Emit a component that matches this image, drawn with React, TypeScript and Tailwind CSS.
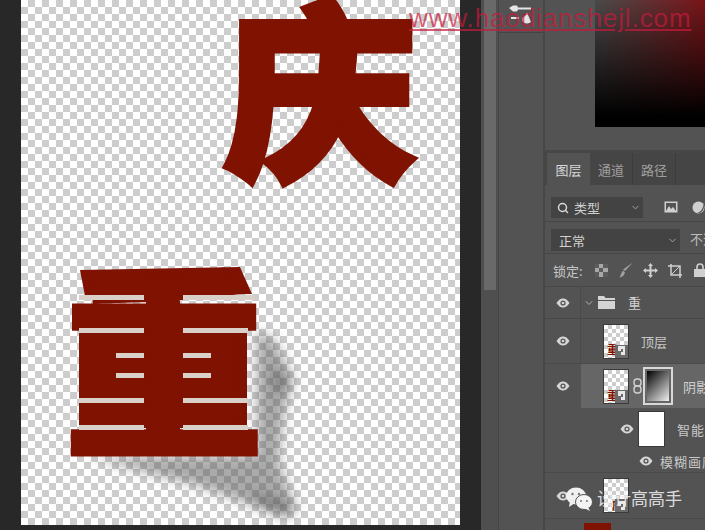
import { ChevronDown, Search } from "lucide-react";

const checker =
  "bg-[conic-gradient(#cdcdcd_25%,#ffffff_0_50%,#cdcdcd_0_75%,#ffffff_0)] bg-[length:14px_14px]";
const smallChecker =
  "bg-[conic-gradient(#cdcdcd_25%,#ffffff_0_50%,#cdcdcd_0_75%,#ffffff_0)] bg-[length:8px_8px]";

function Eye({ className = "" }: { className?: string }) {
  return (
    <svg width="14" height="10" viewBox="0 0 14 10" className={`shrink-0 ${className}`}>
      <path d="M0.5 5C3 1.2 5 0.5 7 0.5S11 1.2 13.5 5C11 8.8 9 9.5 7 9.5S3 8.8 0.5 5Z" fill="#d6d6d6" />
      <circle cx="7" cy="5" r="2.6" fill="#535353" />
      <circle cx="7" cy="5" r="1.3" fill="#d6d6d6" />
    </svg>
  );
}

function Thumb({ glyph, glyphClass }: { glyph: string; glyphClass: string }) {
  return (
    <div className={`relative w-[26px] h-[35px] shrink-0 border border-[#3a3a3a] ${smallChecker}`}>
      <span className={`absolute text-[11px] leading-none font-bold text-[#7f1200] ${glyphClass}`}>{glyph}</span>
      <div className="absolute right-0 bottom-0 w-[13px] h-[13px] bg-[#6a6a6a] flex items-center justify-center">
        <svg width="9" height="10" viewBox="0 0 9 10">
          <path d="M1 0H8V9H4V5H1Z" fill="#e8e8e8" />
          <path d="M4 3H6V6H4Z" fill="#6a6a6a" />
        </svg>
      </div>
    </div>
  );
}

function Tab({ label, active }: { label: string; active?: boolean }) {
  return (
    <div
      className={`w-[43px] h-full flex items-center justify-center text-[13px] ${
        active ? "bg-[#535353] text-[#d8d8d8]" : "bg-[#454545] text-[#a0a0a0] border-r border-[#3c3c3c]"
      }`}
    >
      {label}
    </div>
  );
}

function LayersPanel() {
  return (
    <div className="flex-1 flex flex-col bg-[#535353] text-[#c6c6c6] text-[13px] leading-none">
      <div className="h-[32px] flex bg-[#454545] pl-[2px] shrink-0">
        <Tab label="图层" active />
        <Tab label="通道" />
        <Tab label="路径" />
      </div>

      <div className="h-[37px] flex items-start pt-[12px] pl-[6px] border-b border-[#474747] shrink-0">
        <div className="w-[92px] h-[21px] shrink-0 bg-[#434343] flex items-center pl-[6px] pr-[2px] text-[#cfcfcf]">
          <Search size={12} strokeWidth={3} className="text-[#d8d8d8] shrink-0" />
          <span className="ml-[5px] flex-1">类型</span>
          <ChevronDown size={11} className="text-[#aaaaaa] shrink-0" />
        </div>
        <svg width="14" height="12" viewBox="0 0 14 12" className="ml-[21px] mt-[4px] shrink-0">
          <rect x="0.5" y="0.5" width="13" height="11" fill="#d0d0d0" />
          <rect x="2" y="2" width="10" height="8" fill="#535353" />
          <path d="M2 10L5 5L7 8L9 6L12 10Z" fill="#d0d0d0" />
        </svg>
        <svg width="13" height="13" viewBox="0 0 13 13" className="ml-[14px] mt-[4px] shrink-0">
          <circle cx="6.5" cy="6.5" r="6" fill="#d0d0d0" />
          <path d="M11 3A6 6 0 0 1 5 12A8 8 0 0 0 11 3Z" fill="#535353" />
        </svg>
      </div>

      <div className="h-[32px] flex items-start pt-[7px] pl-[6px] border-b border-[#474747] shrink-0">
        <div className="w-[129px] h-[22px] shrink-0 bg-[#434343] flex items-center pl-[8px] pr-[2px] text-[#d2d2d2]">
          <span className="flex-1">正常</span>
          <ChevronDown size={11} className="text-[#aaaaaa] shrink-0" />
        </div>
        <span className="ml-[10px] mt-[3px] whitespace-nowrap text-[#bcbcbc]">不透明度</span>
      </div>

      <div className="h-[33px] flex items-center pl-[8px] border-b border-[#474747] shrink-0">
        <span className="w-[42px] shrink-0 whitespace-nowrap">锁定:</span>
        <svg width="13" height="13" viewBox="0 0 13 13" className="shrink-0">
          <rect width="13" height="13" fill="#a8a8a8" />
          <path d="M0 0H4V4H0ZM8 0H13V4H8ZM4 4H8V8H4ZM0 8H4V13H0ZM8 8H13V13H8Z" fill="#5c5c5c" />
        </svg>
        <svg width="15" height="16" viewBox="0 0 15 16" className="ml-[11px] shrink-0">
          <path d="M14 0.5L6 9L4 7.5ZM4 8.5L6 10.5C5 14 3 15 0.5 15.5C2 13.5 2 10.5 4 8.5Z" fill="#a0a0a0" />
        </svg>
        <svg width="15" height="15" viewBox="0 0 15 15" className="ml-[9px] shrink-0">
          <path d="M7.5 0L10 3H8.5V6.5H12V5L15 7.5L12 10V8.5H8.5V12H10L7.5 15L5 12H6.5V8.5H3V10L0 7.5L3 5V6.5H6.5V3H5Z" fill="#d0d0d0" />
        </svg>
        <svg width="16" height="15" viewBox="0 0 16 15" className="ml-[10px] shrink-0">
          <path d="M3 1V12H14" fill="none" stroke="#d0d0d0" strokeWidth="1.5" />
          <path d="M0 3H12V15" fill="none" stroke="#d0d0d0" strokeWidth="1.5" />
          <path d="M3 12L12 3" stroke="#d0d0d0" strokeWidth="1" />
        </svg>
        <svg width="12" height="14" viewBox="0 0 12 14" className="ml-[10px] shrink-0">
          <path d="M3 6V4A3 3 0 0 1 9 4V6" fill="none" stroke="#d0d0d0" strokeWidth="1.6" />
          <rect y="6" width="12" height="8" fill="#d0d0d0" />
        </svg>
      </div>

      {/* group row */}
      <div className="h-[32px] flex items-center border-b border-[#474747] shrink-0">
        <div className="w-[36px] shrink-0 flex justify-center border-r border-[#4a4a4a] h-full items-center">
          <Eye />
        </div>
        <ChevronDown size={12} className="ml-[2px] text-[#b0b0b0]" />
        <svg width="17" height="13" viewBox="0 0 17 13" className="ml-[3px]">
          <path d="M0 0H6L7.5 2H17V4H0ZM0 5H17V13H0Z" fill="#d4d4d4" />
        </svg>
        <span className="ml-[13px] text-[#d0d0d0]">重</span>
      </div>

      {/* 顶层 */}
      <div className="h-[45px] flex items-center border-b border-[#4a4a4a] shrink-0">
        <div className="w-[36px] shrink-0 flex justify-center border-r border-[#4a4a4a] h-full items-center">
          <Eye />
        </div>
        <div className="ml-[22px]">
          <Thumb glyph="重" glyphClass="left-[3px] bottom-[3px]" />
        </div>
        <span className="ml-[12px] text-[#c8c8c8]">顶层</span>
      </div>

      {/* 阴影 */}
      <div className="h-[44px] flex items-center shrink-0">
        <div className="w-[36px] shrink-0 flex justify-center h-full items-center">
          <Eye />
        </div>
        <div className="flex-1 h-full bg-[#666666] flex items-center pl-[22px]">
          <Thumb glyph="重" glyphClass="left-[3px] bottom-[2px] text-[#3a1010]" />
          <svg width="9" height="16" viewBox="0 0 9 16" className="ml-[4px] shrink-0">
            <rect x="1" y="1" width="7" height="7" rx="3" fill="none" stroke="#d0d0d0" strokeWidth="1.4" />
            <rect x="1" y="8" width="7" height="7" rx="3" fill="none" stroke="#d0d0d0" strokeWidth="1.4" />
          </svg>
          <div className="ml-[1px] w-[30px] h-[38px] shrink-0 border-[2px] border-[#d8d8d8] p-[2px]">
            <div className="w-full h-full bg-[linear-gradient(135deg,#000000,#f0f0f0)]" />
          </div>
          <span className="ml-[10px] whitespace-nowrap text-[#d0d0d0]">阴影</span>
        </div>
      </div>

      {/* 智能滤镜 */}
      <div className="h-[42px] flex items-center pl-[75px] shrink-0">
        <Eye />
        <div className="ml-[4px] w-[27px] h-[36px] shrink-0 bg-white border border-[#3a3a3a]" />
        <span className="ml-[12px] whitespace-nowrap tracking-[1px] text-[#c8c8c8]">智能滤镜</span>
      </div>

      {/* 模糊画廊 */}
      <div className="h-[23px] flex items-center pl-[94px] border-b border-[#4a4a4a] shrink-0">
        <Eye />
        <span className="ml-[7px] whitespace-nowrap tracking-[1px] text-[#c8c8c8]">模糊画廊</span>
      </div>

      {/* bottom layer */}
      <div className="h-[46px] flex items-center border-b border-[#4a4a4a] shrink-0">
        <div className="w-[36px] shrink-0 flex justify-center h-full items-center">
          <Eye />
        </div>
        <div className="ml-[22px]">
          <Thumb glyph="庆" glyphClass="left-[8px] bottom-[1px]" />
        </div>
      </div>

      <div className="flex-1 pl-[39px] pt-[4px]">
        <div className="w-[27px] h-[10px] bg-[#7f1200]" />
      </div>
    </div>
  );
}

const slit = "absolute h-[5px] bg-[#d9d0ca]";

export default function App() {
  return (
    <div className="relative w-[705px] h-[530px] overflow-hidden flex bg-[#282828] font-['Noto_Sans_CJK_SC','Liberation_Sans',sans-serif]">
      <div className="w-[21px] shrink-0" />

      {/* Canvas */}
      <div className={`relative w-[439px] h-[525px] shrink-0 overflow-hidden ${checker}`}>
        <svg width="439" height="525" className="absolute left-0 top-0">
          <defs>
            <filter id="b1" x="-30%" y="-30%" width="160%" height="160%">
              <feGaussianBlur stdDeviation="6" />
            </filter>
          </defs>
          <g filter="url(#b1)" fill="#555555">
            <path d="M236 330L254 340L272 378L262 420L258 462L276 510L262 515L230 505L175 485L70 458L236 455Z" opacity="0.5" />
            <path d="M250 368L270 378L266 392L252 392Z" opacity="0.4" />
            <path d="M230 492L272 505L268 518L240 508Z" opacity="0.55" />
          </g>
        </svg>
        <span className="absolute left-[204px] top-[-32px] text-[190px] leading-[1.2] font-black text-[#7f1200] [-webkit-text-stroke:8px_#7f1200] whitespace-nowrap">
          庆
        </span>

        {/* artwork: the slab of 重 behind the glyph */}
        <div className="absolute left-[59px] top-[267px] w-[172px] h-[30px] bg-[#7f1200] [clip-path:polygon(0_10%,93%_0,100%_90%,3%_100%)]" />
        <div className="absolute left-[58px] top-[330px] w-[168px] h-[98px] bg-[#7f1200]" />
        <span className="absolute left-[44px] top-[235px] text-[198px] leading-[1.2] font-black text-[#7f1200] [-webkit-text-stroke:5px_#7f1200] whitespace-nowrap">
          重
        </span>
        <div className={`${slit} left-[58px] top-[295px] w-[65px]`} />
        <div className={`${slit} left-[162px] top-[295px] w-[72px]`} />
        <div className={`${slit} left-[58px] top-[328px] w-[65px]`} />
        <div className={`${slit} left-[162px] top-[328px] w-[65px]`} />
        <div className={`${slit} left-[95px] top-[353px] w-[28px]`} />
        <div className={`${slit} left-[162px] top-[353px] w-[28px]`} />
        <div className={`${slit} left-[95px] top-[373px] w-[28px]`} />
        <div className={`${slit} left-[162px] top-[373px] w-[28px]`} />
        <div className={`${slit} left-[58px] top-[398px] w-[65px]`} />
        <div className={`${slit} left-[162px] top-[398px] w-[65px]`} />
        <div className={`${slit} left-[58px] top-[425px] w-[65px]`} />
        <div className={`${slit} left-[162px] top-[425px] w-[65px]`} />
      </div>

      <div className="w-[21px] shrink-0" />

      {/* Scrollbar */}
      <div className="w-[18px] shrink-0 bg-[#4f4f4f] px-[3px] border-r border-[#444444]">
        <div className="w-[12px] h-[290px] bg-[#696969]" />
      </div>

      {/* Tool column */}
      <div className="w-[46px] shrink-0 bg-[#535353] border-r-2 border-[#474747]">
        <div className="h-[33px] border-b border-[#444444] pl-[10px] pt-[5px]">
          <svg width="24" height="20" viewBox="0 0 24 20">
            <path d="M0 3L4 0.5H8L9 2.5H22V4.5H9L8 6.5H4Z" fill="#e4e4e4" />
            <path d="M2 12H10V14H2Z" fill="#e4e4e4" />
            <path d="M13 13L17 10V8H19V10L22 17C20 19 15 19 13 16Z" fill="#e4e4e4" />
          </svg>
        </div>
      </div>

      {/* Right column */}
      <div className="flex-1 flex flex-col min-w-0">
        <div className="h-[153px] shrink-0 bg-[#535353] flex items-start border-b-[3px] border-[#474747]">
          <div className="w-[50px] shrink-0" />
          <div className="flex-1 h-[127px] bg-[linear-gradient(to_bottom,transparent,#000000_92%),linear-gradient(to_right,#4a4a4a,#7a1418)]" />
        </div>
        <LayersPanel />
      </div>

      {/* Watermarks */}
      <a className="absolute left-[409px] top-[3px] text-[26px] leading-[30px] tracking-[0.9px] underline whitespace-nowrap text-[#c8193c]/70 font-['Liberation_Sans',sans-serif]">
        www.haodianshejl.com
      </a>
      <svg width="28" height="24" viewBox="0 0 28 24" className="absolute left-[565px] top-[487px]">
        <ellipse cx="11" cy="9" rx="10" ry="8.5" fill="#f0f0f0" />
        <path d="M5 14L4 20L10 16Z" fill="#f0f0f0" />
        <ellipse cx="19" cy="15" rx="8.5" ry="7.5" fill="#f4f4f4" stroke="#535353" strokeWidth="1" />
        <path d="M23 20L25 24L19 21Z" fill="#f4f4f4" />
        <circle cx="7.5" cy="7" r="1.2" fill="#777777" />
        <circle cx="14" cy="7" r="1.2" fill="#777777" />
        <circle cx="16" cy="14" r="1" fill="#777777" />
        <circle cx="22" cy="14" r="1" fill="#777777" />
      </svg>
      <span className="absolute left-[597px] top-[486px] text-[17px] leading-[24px] whitespace-nowrap text-[#eeeeee]/90">
        设计高高手
      </span>
    </div>
  );
}
